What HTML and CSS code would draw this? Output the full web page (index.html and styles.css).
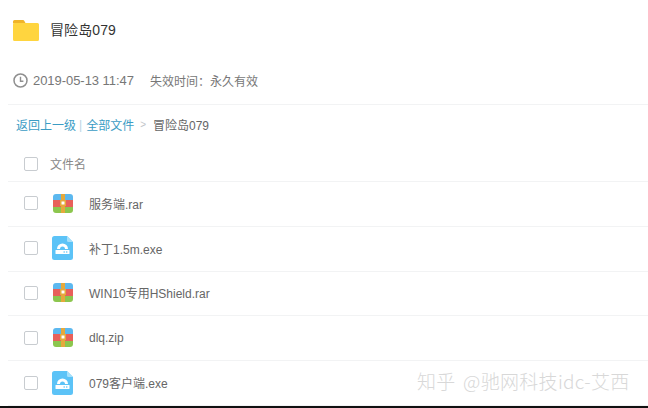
FILE: index.html
```html
<!DOCTYPE html>
<html lang="zh-CN">
<head>
    <meta charset="UTF-8">
    <title>冒险岛079</title>
    <link rel="stylesheet" href="styles.css">
</head>
<body>
    <svg class="defs" width="0" height="0">
        <symbol id="icon_rar" viewBox="0 0 20 19">
            <path d="M3 0H17A3 3 0 0 1 20 3V6H0V3A3 3 0 0 1 3 0Z" fill="#5cb8ef"/>
            <rect y="6" width="20" height="7" fill="#e8605a"/>
            <path d="M0 13H20V16A3 3 0 0 1 17 19H3A3 3 0 0 1 0 16Z" fill="#8cc64e"/>
            <rect x="8" width="4" height="19" fill="#e5a93c"/>
            <rect x="7" y="6" width="6" height="6" fill="#e5a93c"/>
            <rect x="8.5" y="7.5" width="3" height="3" fill="#fff"/>
        </symbol>
        <symbol id="icon_exe" viewBox="0 0 21 24">
            <path d="M2.5 0H15L21 6V21.5A2.5 2.5 0 0 1 18.5 24H2.5A2.5 2.5 0 0 1 0 21.5V2.5A2.5 2.5 0 0 1 2.5 0Z" fill="#5cc3f7"/>
            <path d="M15 0L21 6H16.5A1.5 1.5 0 0 1 15 4.5Z" fill="#a5e0fb"/>
            <path d="M5 13A5.5 5.5 0 0 1 16 13H13A2.5 2.5 0 0 0 8 13Z" fill="#fff"/>
            <rect x="3.5" y="14" width="14" height="4" rx="0.5" fill="#fff"/>
            <rect x="11.5" y="15.4" width="1.4" height="1.2" fill="#5cc3f7"/>
            <rect x="14" y="15.4" width="1.4" height="1.2" fill="#5cc3f7"/>
        </symbol>
    </svg>

    <div class="page">
        <div class="title_row">
            <svg class="folder" viewBox="0 0 26 21">
                <path d="M1.5 0H9.5A2 2 0 0 1 11.5 1.2L12.5 3H2V3.5H0V1.5A1.5 1.5 0 0 1 1.5 0Z" fill="#f0b429"/>
                <path d="M1.5 3H24.5A1.5 1.5 0 0 1 26 4.5V19.5A1.5 1.5 0 0 1 24.5 21H1.5A1.5 1.5 0 0 1 0 19.5V4.5A1.5 1.5 0 0 1 1.5 3Z" fill="#ffd53f"/>
            </svg>
            <h1>冒险岛079</h1>
        </div>

        <div class="meta_row">
            <svg class="clock" viewBox="0 0 15 15">
                <circle cx="7.5" cy="7.5" r="6.5" fill="none" stroke="#8f8f8f" stroke-width="1.5"/>
                <path d="M7.5 3.8V8.3H10.4" fill="none" stroke="#8f8f8f" stroke-width="1.4"/>
            </svg>
            <span class="date">2019-05-13 11:47</span>
            <span class="expire">失效时间：永久有效</span>
        </div>

        <div class="crumbs">
            <a href="#">返回上一级</a>
            <span class="bar">|</span>
            <a href="#">全部文件</a>
            <span class="arrow">&gt;</span>
            <span class="current">冒险岛079</span>
        </div>

        <div class="row head">
            <span class="check"></span>
            <span class="head_name">文件名</span>
        </div>
        <div class="row">
            <span class="check"></span>
            <span class="icon_box"><svg class="rar"><use href="#icon_rar"/></svg></span>
            <span class="name">服务端.rar</span>
        </div>
        <div class="row">
            <span class="check"></span>
            <span class="icon_box"><svg class="exe"><use href="#icon_exe"/></svg></span>
            <span class="name">补丁1.5m.exe</span>
        </div>
        <div class="row">
            <span class="check"></span>
            <span class="icon_box"><svg class="rar"><use href="#icon_rar"/></svg></span>
            <span class="name">WIN10专用HShield.rar</span>
        </div>
        <div class="row">
            <span class="check"></span>
            <span class="icon_box"><svg class="rar"><use href="#icon_rar"/></svg></span>
            <span class="name">dlq.zip</span>
        </div>
        <div class="row">
            <span class="check"></span>
            <span class="icon_box"><svg class="exe"><use href="#icon_exe"/></svg></span>
            <span class="name">079客户端.exe</span>
        </div>
    </div>

    <div class="watermark">知乎 @驰网科技idc-艾西</div>
    <div class="bottom_line"></div>
</body>
</html>
```

FILE: styles.css
```css
html, body {
    margin: 0;
    height: 100%;
    overflow: hidden;
    background: #fff;
}

body {
    position: relative;
    font-family: "Liberation Sans", "Noto Sans CJK SC", sans-serif;
    font-size: 12px;
    color: #666;
}

.defs {
    position: absolute;
}

.page {
    padding-left: 8px;
}

/* Title */
.title_row {
    display: flex;
    align-items: center;
    height: 60px;
    padding-left: 5px;
}

.folder {
    width: 26px;
    height: 21px;
    margin-right: 11px;
}

h1 {
    margin: 0 0 2px;
    font-size: 14px;
    font-weight: normal;
    letter-spacing: 0.1px;
    color: #333;
}

/* Date and expiry */
.meta_row {
    display: flex;
    align-items: center;
    height: 41px;
    padding-left: 5px;
    padding-bottom: 3px;
    border-bottom: 1px solid #f2f3f4;
    color: #777;
}

.clock {
    width: 15px;
    height: 15px;
    margin-right: 5px;
}

.date {
    font-size: 13px;
    letter-spacing: -0.05px;
    margin-right: 16px;
}

/* Breadcrumb */
.crumbs {
    display: flex;
    align-items: center;
    height: 39px;
    padding-left: 8px;
    padding-bottom: 2px;
}

.crumbs a {
    color: #3b9cc4;
    text-decoration: none;
}

.bar {
    margin: 0 4px 0 3px;
    color: #b8d4e4;
}

.arrow {
    margin: 0 7px 0 6px;
    color: #c0c4c8;
    font-size: 10px;
}

/* File list */
.row {
    display: flex;
    align-items: center;
    height: 42.8px;
    padding-left: 16px;
    padding-bottom: 1px;
    border-bottom: 1px solid #f2f3f4;
}

.row.head {
    height: 35px;
    padding-bottom: 0;
    color: #888;
}

.check {
    width: 12px;
    height: 12px;
    border: 1px solid #c8ccd0;
    border-radius: 2px;
}

.head_name {
    margin-left: 12px;
}

.icon_box {
    display: flex;
    width: 21px;
    margin-left: 14px;
    margin-right: 16px;
}

.rar {
    width: 20px;
    height: 19px;
    margin-left: 1px;
}

.exe {
    width: 21px;
    height: 24px;
}

/* Overlays */
.watermark {
    position: absolute;
    left: 417px;
    top: 369px;
    font-family: "Noto Sans CJK SC", sans-serif;
    font-size: 19px;
    font-weight: 300;
    line-height: 24px;
    letter-spacing: 0.3px;
    word-spacing: 3px;
    color: #d8d8d8;
}

.bottom_line {
    position: absolute;
    left: 0;
    right: 0;
    bottom: 0;
    height: 2px;
    background: #111;
}
```
